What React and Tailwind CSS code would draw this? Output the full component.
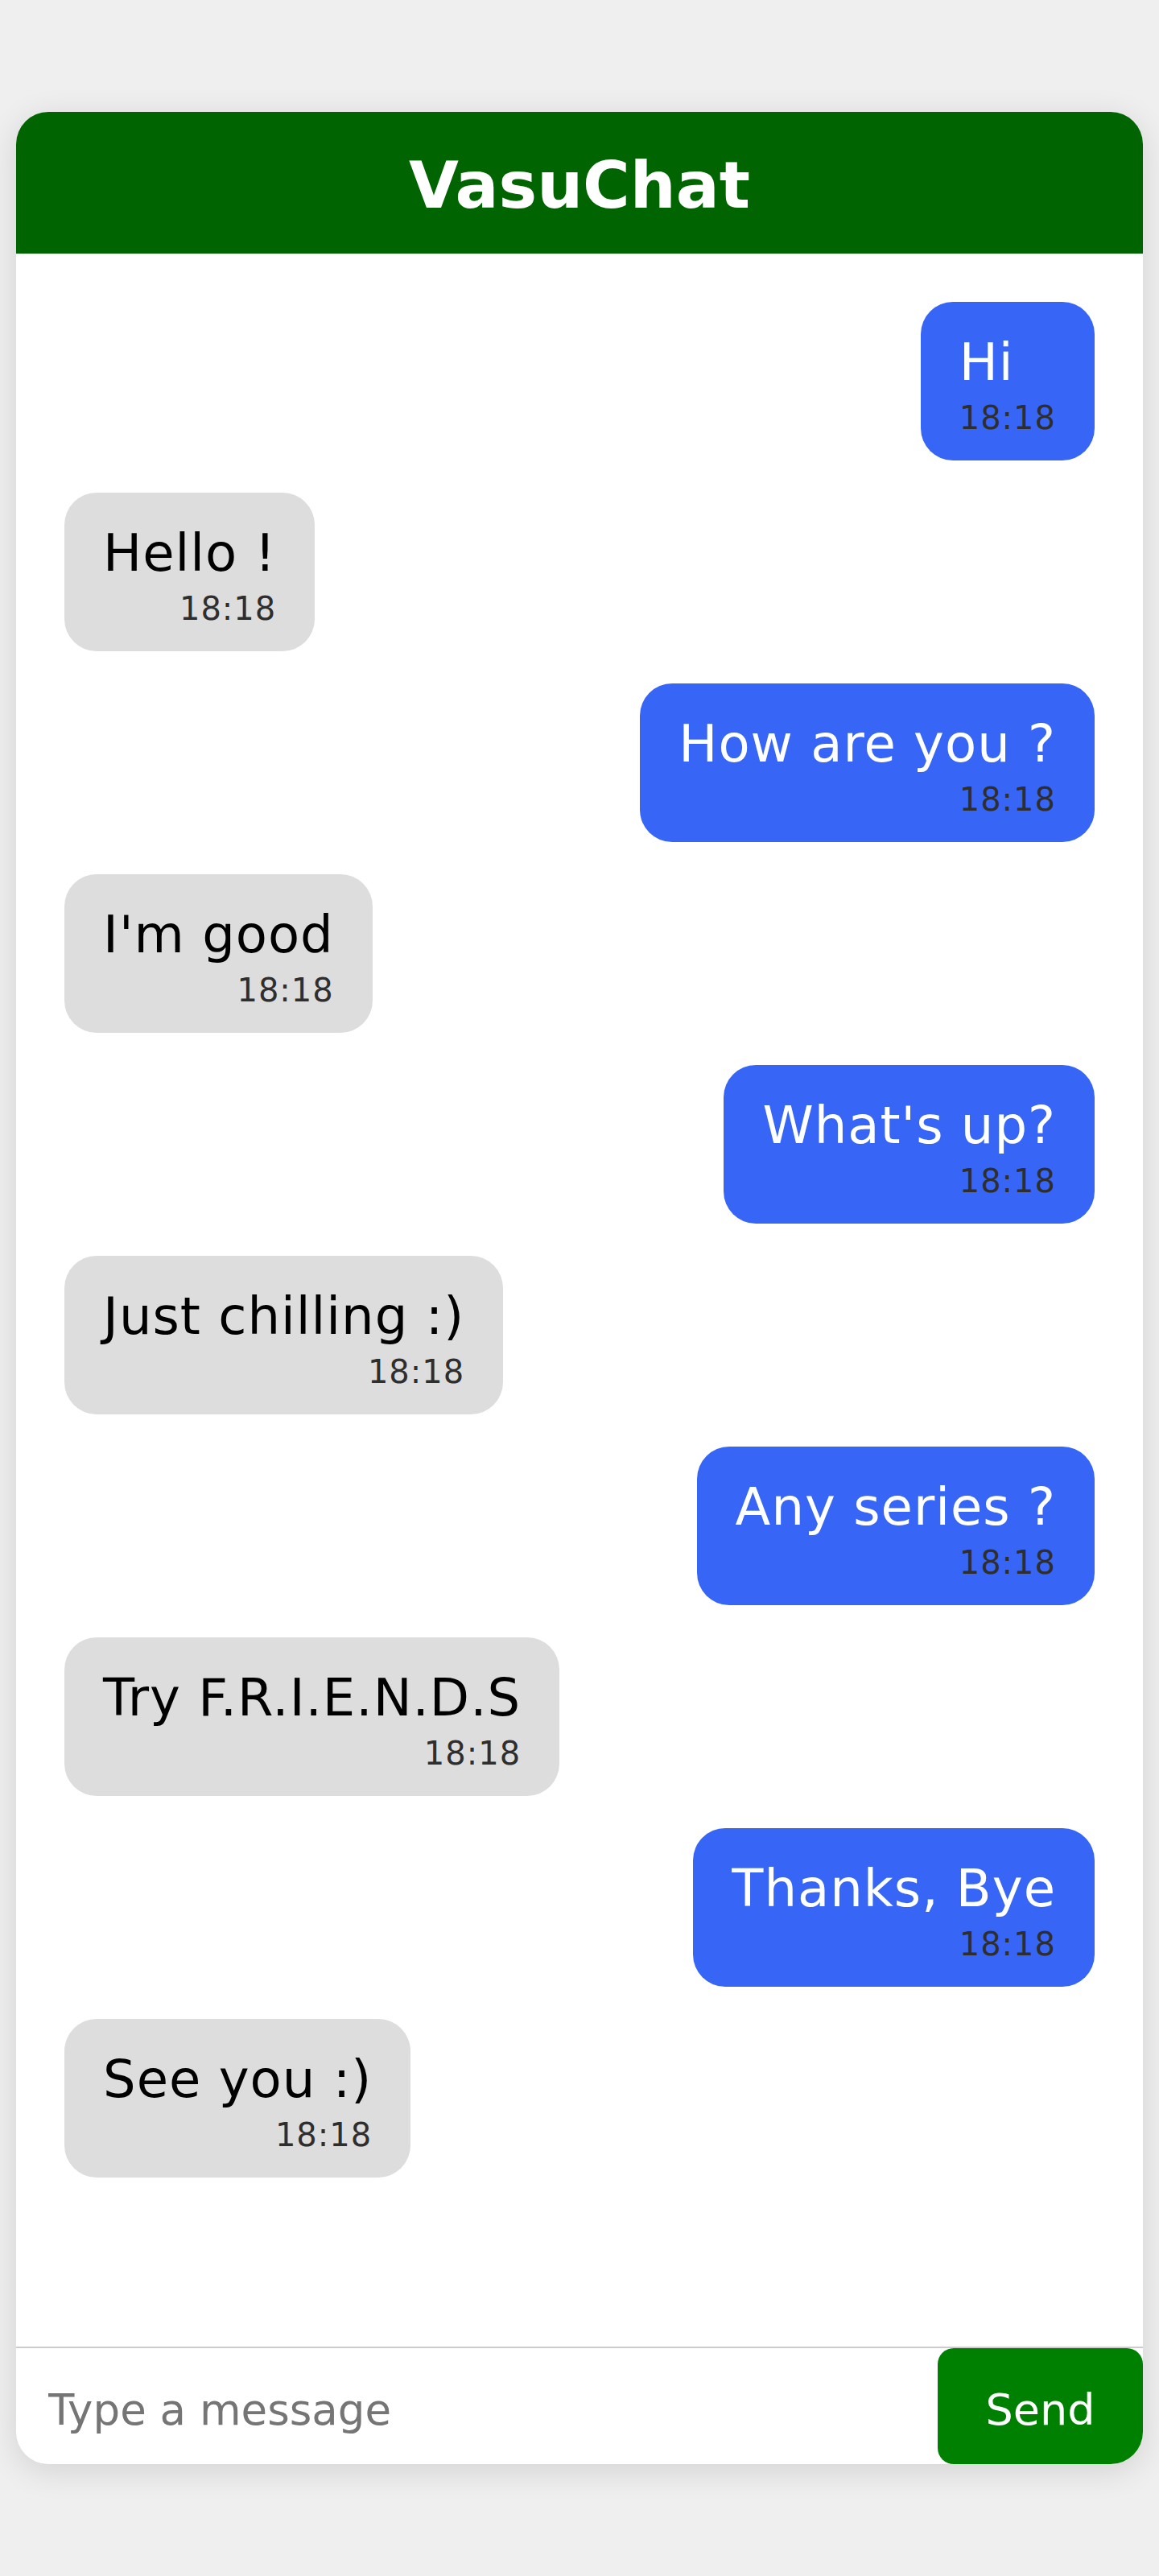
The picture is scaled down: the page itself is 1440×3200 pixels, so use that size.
import React from "react";

const messages = [
  { text: "Hi", me: true },
  { text: "Hello !", me: false },
  { text: "How are you ?", me: true },
  { text: "I'm good", me: false },
  { text: "What's up?", me: true },
  { text: "Just chilling :)", me: false },
  { text: "Any series ?", me: true },
  { text: "Try F.R.I.E.N.D.S", me: false },
  { text: "Thanks, Bye", me: true },
  { text: "See you :)", me: false },
];

function Bubble({ text, me }) {
  return (
    <div
      className={
        me
          ? "self-end flex flex-col rounded-[40px] bg-[#3766f6] text-white px-[48px] pt-[30px] pb-[29px]"
          : "self-start flex flex-col rounded-[40px] bg-[#dddddd] text-black px-[48px] pt-[30px] pb-[29px]"
      }
    >
      <div className="text-[64px] leading-[90px] whitespace-nowrap tracking-[1px]">{text}</div>
      <div className="text-[40px] leading-[48px] text-right text-[#2e2e2e] tracking-[1px]">18:18</div>
    </div>
  );
}

export default function App() {
  return (
    <div className="min-h-[3200px] w-full bg-[#efefef] pt-[139px] px-[20px] font-['DejaVu_Sans',sans-serif]">
      <div className="h-[2922px] w-full flex flex-col rounded-[40px] overflow-hidden bg-white shadow-[0_8px_40px_rgba(0,0,0,0.12)]">
        <div className="h-[176px] shrink-0 bg-[#006400] pt-[41px] text-center">
          <h1 className="text-[80px] leading-[102px] font-bold text-white">VasuChat</h1>
        </div>
        <div className="flex-1 flex flex-col gap-[40px] px-[60px] pt-[60px] overflow-hidden">
          {messages.map((m, i) => (
            <Bubble key={i} text={m.text} me={m.me} />
          ))}
        </div>
        <div className="h-[146px] shrink-0 flex border-t-2 border-[#cccccc]">
          <input
            type="text"
            placeholder="Type a message"
            className="flex-1 min-w-0 h-full pl-[40px] pt-[8px] text-[53px] bg-transparent outline-none placeholder:text-[#757575]"
          />
          <button className="w-[255px] h-full rounded-[20px] bg-[#008000] text-white text-[54px] pt-[8px]">
            Send
          </button>
        </div>
      </div>
    </div>
  );
}
